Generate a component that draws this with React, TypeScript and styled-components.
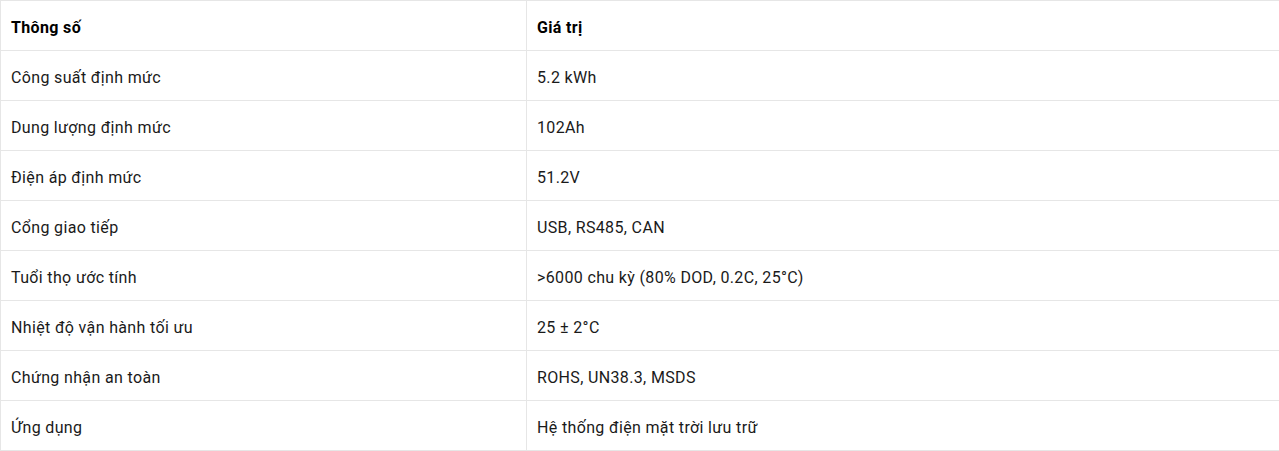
import React from "react";
import styled, { createGlobalStyle } from "styled-components";

const GlobalStyle = createGlobalStyle`
  html, body { margin: 0; padding: 0; background: #ffffff; }
  body { font-family: Roboto, "Noto Sans", Arial, sans-serif; overflow: hidden; }
`;

const Table = styled.table`
  width: 1290px;
  border-collapse: collapse;
  table-layout: fixed;
  font-family: Roboto, "Noto Sans", Arial, sans-serif;
  font-size: 16px;
  letter-spacing: 0.35px;
  color: #1a1a1a;
`;

const Row = styled.tr`
  height: 50px;
`;

const Cell = styled.td<{ $first?: boolean; $head?: boolean }>`
  border: 1px solid #e6e6e6;
  padding: 3px 10px 0 10px;
  text-align: left;
  vertical-align: middle;
  width: ${(p) => (p.$first ? "505px" : "auto")};
  font-weight: ${(p) => (p.$head ? 700 : 400)};
  color: ${(p) => (p.$head ? "#000000" : "#1a1a1a")};
`;

const rows: [string, React.ReactNode][] = [
  ["Công suất định mức", "5.2 kWh"],
  ["Dung lượng định mức", "102Ah"],
  ["Điện áp định mức", "51.2V"],
  ["Cổng giao tiếp", "USB, RS485, CAN"],
  ["Tuổi thọ ước tính", ">6000 chu kỳ (80% DOD, 0.2C, 25°C)"],
  ["Nhiệt độ vận hành tối ưu", "25 ± 2°C"],
  ["Chứng nhận an toàn", "ROHS, UN38.3, MSDS"],
  ["Ứng dụng", "Hệ thống điện mặt trời lưu trữ"],
];

export default function App() {
  return (
    <>
      <GlobalStyle />
      <Table>
        <thead>
          <Row>
            <Cell as="th" $first $head>Thông số</Cell>
            <Cell as="th" $head>Giá trị</Cell>
          </Row>
        </thead>
        <tbody>
          {rows.map(([k, v]) => (
            <Row key={k}>
              <Cell $first>{k}</Cell>
              <Cell>{v}</Cell>
            </Row>
          ))}
        </tbody>
      </Table>
    </>
  );
}
